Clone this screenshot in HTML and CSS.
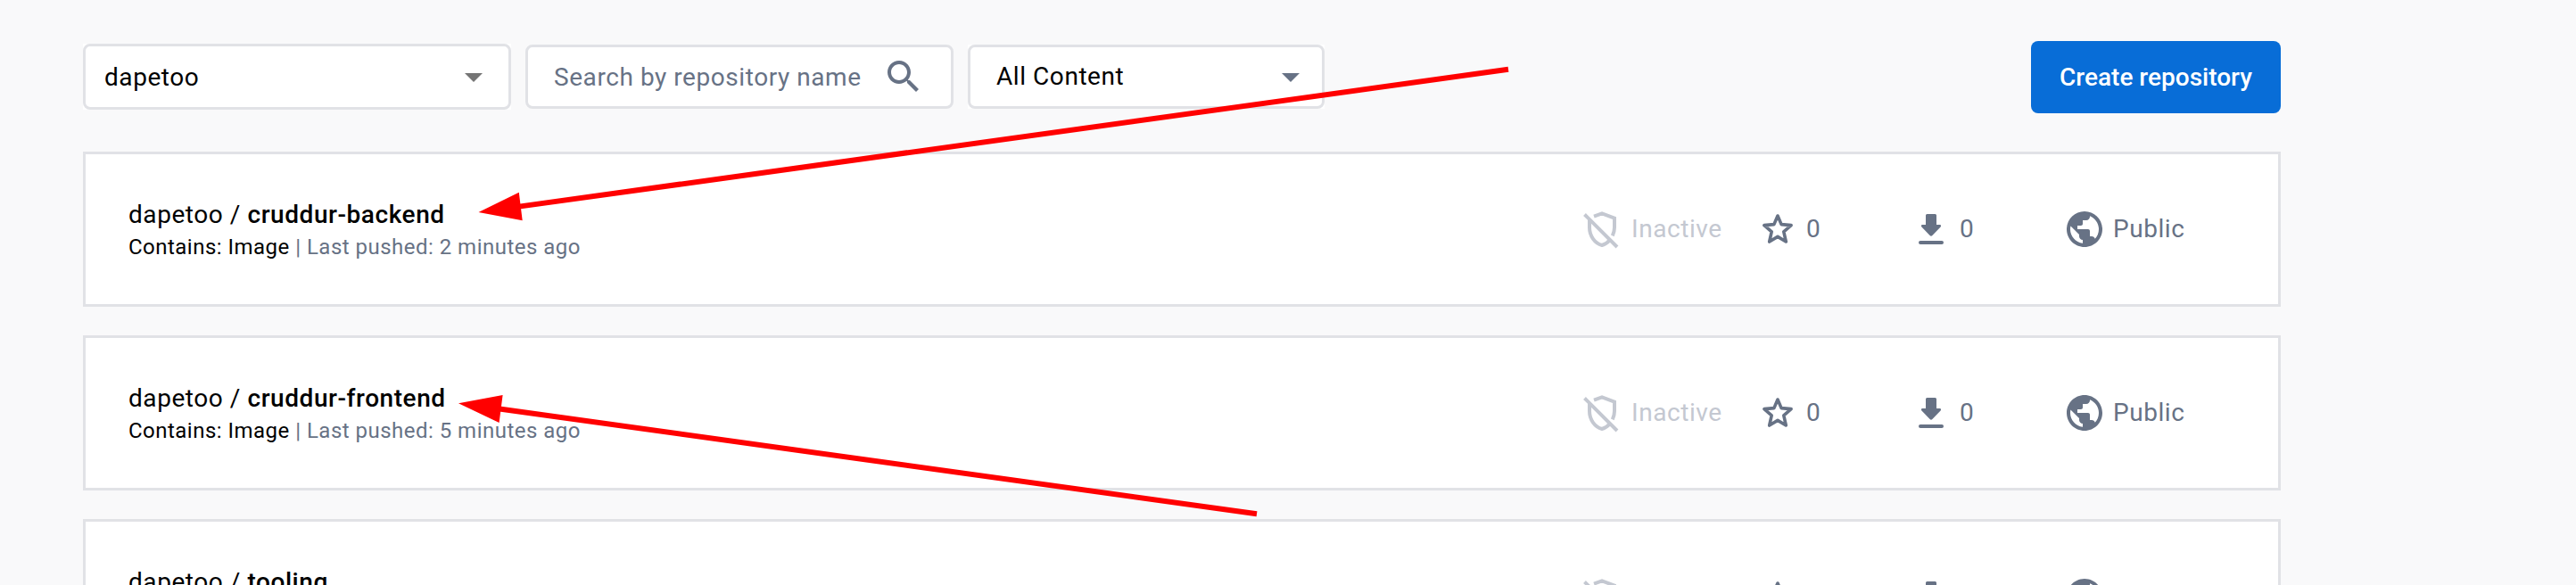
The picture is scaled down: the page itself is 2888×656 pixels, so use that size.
FILE: index.html
```
<!DOCTYPE html>
<html lang="en">
<head>
<meta charset="utf-8">
<title>Repositories</title>
<link rel="stylesheet" href="styles.css">
</head>
<body>
<svg class="defs" width="0" height="0" aria-hidden="true">
  <symbol id="caret" viewBox="0 0 24 24"><path d="M7 10l5 5 5-5z"/></symbol>
  <symbol id="search" viewBox="0 0 24 24"><path d="M15.5 14h-.79l-.28-.27C15.41 12.59 16 11.11 16 9.5 16 5.91 13.09 3 9.5 3S3 5.91 3 9.5 5.91 16 9.5 16c1.61 0 3.09-.59 4.23-1.57l.27.28v.79l5 4.99L20.49 19l-4.99-5zm-6 0C7.01 14 5 11.99 5 9.5S7.01 5 9.5 5 14 7.01 14 9.5 11.99 14 9.5 14z"/></symbol>
  <symbol id="shield-off" viewBox="0 0 48 48"><path fill="none" stroke="currentColor" stroke-width="4" d="M15 9.6L24 6.4 38 11.6V22c0 3.6-.8 6.4-2.2 9.4M10 13v9c0 9.600 6 18 14 20 3.400-.9 6.400-3 8.700-5.800M4.500 7.500L41 44"/></symbol>
  <symbol id="star" viewBox="0 0 40 40"><path fill="none" stroke="currentColor" stroke-width="3.600" stroke-linejoin="round" d="M20 5l4.100 9.600 11 1-8.300 7.200 2.500 11.200L20 28.400 10.700 34l2.500-11.200L4.900 15.600l11-1z"/></symbol>
  <symbol id="download" viewBox="0 0 28 34"><path d="M9.500 0h9a1.500 1.500 0 0 1 1.500 1.500V12h3.600c1.500 0 2 1.400 1 2.400l-9.200 9.700c-.8.900-2 .9-2.800 0L3.400 14.400c-1-1-.5-2.400 1-2.400H8V1.500A1.500 1.500 0 0 1 9.500 0z"/><rect y="30" width="28" height="4" rx="2"/></symbol>
  <symbol id="globe" viewBox="0 0 24 24"><path d="M12 2C6.480 2 2 6.480 2 12s4.480 10 10 10 10-4.480 10-10S17.520 2 12 2zm-1 17.930c-3.950-.49-7-3.850-7-7.930 0-.62.080-1.210.21-1.790L9 15v1c0 1.100.9 2 2 2v1.930zm6.900-2.540c-.26-.81-1-1.390-1.900-1.390h-1v-3c0-.55-.45-1-1-1H8v-2h2c.55 0 1-.45 1-1V7h2c1.100 0 2-.9 2-2v-.41c2.930 1.190 5 4.060 5 7.410 0 2.080-.8 3.970-2.100 5.390z"/></symbol>
</svg>
<main class="page">
  <div class="toolbar">
    <div class="field-wrap"><div class="field account"><span>dapetoo</span><svg class="icon48"><use href="#caret"/></svg></div></div>
    <div class="field search"><span>Search by repository name</span><svg class="icon48"><use href="#search"/></svg></div>
    <div class="field-wrap"><div class="field content"><span>All Content</span><svg class="icon48"><use href="#caret"/></svg></div></div>
    <button class="create">Create repository</button>
  </div>
  <section class="list">
    <article class="card">
      <div class="info">
        <div class="title">dapetoo / <b>cruddur-backend</b></div>
        <div class="meta"><span class="contains">Contains: Image</span> | Last pushed: 2 minutes ago</div>
      </div>
      <div class="stat inactive"><svg class="icon48"><use href="#shield-off"/></svg><span>Inactive</span></div>
      <div class="stat stars"><svg class="icon-star"><use href="#star"/></svg><span>0</span></div>
      <div class="stat pulls"><svg class="icon-download"><use href="#download"/></svg><span>0</span></div>
      <div class="stat visibility"><svg class="icon48"><use href="#globe"/></svg><span>Public</span></div>
    </article>
    <article class="card">
      <div class="info">
        <div class="title">dapetoo / <b>cruddur-frontend</b></div>
        <div class="meta"><span class="contains">Contains: Image</span> | Last pushed: 5 minutes ago</div>
      </div>
      <div class="stat inactive"><svg class="icon48"><use href="#shield-off"/></svg><span>Inactive</span></div>
      <div class="stat stars"><svg class="icon-star"><use href="#star"/></svg><span>0</span></div>
      <div class="stat pulls"><svg class="icon-download"><use href="#download"/></svg><span>0</span></div>
      <div class="stat visibility"><svg class="icon48"><use href="#globe"/></svg><span>Public</span></div>
    </article>
    <article class="card">
      <div class="info">
        <div class="title">dapetoo / <b>tooling</b></div>
      </div>
      <div class="stat inactive"><svg class="icon48"><use href="#shield-off"/></svg></div>
      <div class="stat stars"><svg class="icon-star"><use href="#star"/></svg></div>
      <div class="stat pulls"><svg class="icon-download"><use href="#download"/></svg></div>
      <div class="stat visibility"><svg class="icon48"><use href="#globe"/></svg></div>
    </article>
  </section>
</main>
<svg class="arrows" viewBox="0 0 2888 656" aria-hidden="true">
  <path class="shaft" d="M580 231.900L1691 77.800M560 458.500L1409 576.300"/>
  <path class="head" d="M536.500 238L581.800 215.700 585.700 247.300zM514 452.300L563.600 443 559.600 474z"/>
</svg>
</body>
</html>
```

FILE: styles.css
```
* { box-sizing: border-box; }
body {
  margin: 0;
  height: 656px;
  overflow: hidden;
  background: #f9f9fa;
  color: #000;
  font-family: Roboto, sans-serif;
  font-size: 28px;
  letter-spacing: 0.56px;
}
svg { display: block; flex: none; fill: currentColor; }
.defs { position: absolute; }
.page { width: 2557px; height: 656px; overflow: hidden; padding: 46px 0 0 93px; }
.toolbar { display: flex; align-items: flex-start; height: 124px; }
.field-wrap { background: #fff; }
.field {
  display: flex;
  align-items: center;
  justify-content: space-between;
  height: 72px;
  background: #fff;
  border: 3px solid #e1e2e6;
  border-radius: 8px;
  white-space: nowrap;
}
.field-wrap { margin-top: 4px; }
.field-wrap:first-child { margin-top: 3px; }
.account { width: 480px; height: 74px; padding: 0 15px 0 21px; }
.account svg { color: #757575; }
.search { width: 480px; margin: 4px 16px 0; padding: 0 29px 0 29px; color: #677285; }
.content { width: 400px; padding: 0 11px 0 29px; }
.content svg { color: #677285; }
.content span { margin-top: -2px; }
.icon48 { width: 48px; height: 48px; }
.create {
  width: 280px;
  height: 81px;
  margin-left: auto;
  padding: 0;
  border: 0;
  border-radius: 8px;
  background: #086dd7;
  color: #fff;
  font: 500 28px Roboto, sans-serif;
  letter-spacing: 0;
}
.list { display: grid; gap: 32px; }
.card {
  display: grid;
  grid-template-columns: 1676px 204px 175px 162px 1fr;
  height: 174px;
  background: #fff;
  border: 3px solid #e1e2e6;
}
.info { padding: 48px 0 0 48px; }
.title { line-height: 40px; white-space: nowrap; }
.title b { font-weight: 500; }
.meta { font-size: 24px; line-height: 32px; letter-spacing: 0.48px; color: #677285; white-space: nowrap; }
.contains { color: #000; }
.stat { display: flex; align-items: center; height: 48px; margin-top: 60px; color: #677285; }
.stat span { margin-top: -1px; }
.inactive { color: #c4c8d1; }
.inactive span { margin-left: 9px; }
.icon-star { width: 40px; height: 40px; margin-left: -3px; }
.stars span { margin-left: 12px; }
.icon-download { width: 28px; height: 34px; }
.pulls span { margin-left: 18px; }
.visibility span { margin-left: 8px; }
.arrows { position: absolute; left: 0; top: 0; width: 2888px; height: 656px; }
.shaft { fill: none; stroke: #f00; stroke-width: 6; }
.head { fill: #f00; }
```
